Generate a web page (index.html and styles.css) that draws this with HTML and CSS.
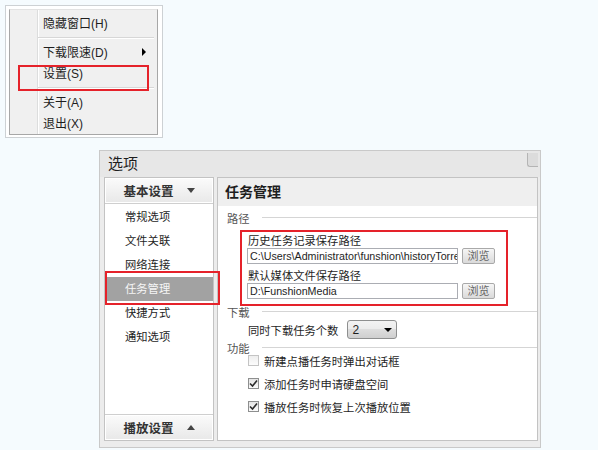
FILE: index.html
```html
<!DOCTYPE html>
<html lang="zh-CN">
<head>
    <meta charset="UTF-8">
    <title>选项</title>
    <link rel="stylesheet" href="styles.css">
</head>
<body>
    <div class="menu">
        <div class="menu-inner">
            <div class="item">隐藏窗口(H)</div>
            <div class="sep"></div>
            <div class="item">下载限速(D)<span class="arrow"></span></div>
            <div class="item">设置(S)</div>
            <div class="sep"></div>
            <div class="item">关于(A)</div>
            <div class="item">退出(X)</div>
        </div>
        <div class="mark mark-menu"></div>
    </div>

    <div class="dialog">
        <div class="titlebar">
            <span class="title">选项</span>
            <span class="corner"></span>
        </div>
        <div class="body">
            <div class="side">
                <div class="side-head">基本设置<span class="tri-down"></span></div>
                <div class="side-list">
                    <div class="side-item">常规选项</div>
                    <div class="side-item">文件关联</div>
                    <div class="side-item">网络连接</div>
                    <div class="side-item active">任务管理</div>
                    <div class="side-item">快捷方式</div>
                    <div class="side-item">通知选项</div>
                </div>
                <div class="side-foot">播放设置<span class="tri-up"></span></div>
            </div>

            <div class="main">
                <div class="main-head">任务管理</div>
                <div class="main-body">
                    <div class="group">路径</div>
                    <div class="fields">
                        <div class="field-label">历史任务记录保存路径</div>
                        <div class="path-row">
                            <div class="path"><span>C:\Users\Administrator\funshion\historyTorrent</span></div>
                            <div class="btn">浏览</div>
                        </div>
                        <div class="field-label">默认媒体文件保存路径</div>
                        <div class="path-row">
                            <div class="path"><span>D:\FunshionMedia</span></div>
                            <div class="btn">浏览</div>
                        </div>
                    </div>

                    <div class="group group-dl">下载</div>
                    <div class="opt-row">
                        同时下载任务个数
                        <div class="combo">2<span class="tri-down small"></span></div>
                    </div>

                    <div class="group group-fn">功能</div>
                    <div class="checks">
                        <div class="check"><span class="box off"></span>新建点播任务时弹出对话框</div>
                        <div class="check"><span class="box"><svg width="9" height="9" viewBox="0 0 9 9"><path d="M1 4.5 L3.5 7 L8 1.5" fill="none" stroke="#2b2b2b" stroke-width="1.6"/></svg></span>添加任务时申请硬盘空间</div>
                        <div class="check"><span class="box"><svg width="9" height="9" viewBox="0 0 9 9"><path d="M1 4.5 L3.5 7 L8 1.5" fill="none" stroke="#2b2b2b" stroke-width="1.6"/></svg></span>播放任务时恢复上次播放位置</div>
                    </div>
                </div>
            </div>
        </div>
        <div class="mark mark-side"></div>
        <div class="mark mark-path"></div>
    </div>
</body>
</html>
```

FILE: styles.css
```css
body {
    margin: 0;
    background-color: #f5fbfe;
    font-family: "Liberation Sans", "Noto Sans CJK SC", sans-serif;
    font-size: 11.3px;
    color: #1e1e1e;
}

/* tray menu */
.menu {
    position: relative;
    margin: 5px 0 0 5px;
    width: 158px;
    height: 133px;
    box-sizing: border-box;
    border: 1px solid #cdd1d4;
    background: #fff;
    padding: 3px 4px 2px 3px;
}
.menu-inner {
    height: 100%;
    box-sizing: border-box;
    border: 1px solid #a7a7a7;
    border-top-color: #e2e2e2;
    background: linear-gradient(to right, #f0f0f0 27px, #dcdddd 27px, #dcdddd 28px, #fff 28px, #fff 29px, #f0f0f0 29px);
    padding-top: 2px;
}
.item {
    height: 21px;
    display: flex;
    align-items: center;
    justify-content: space-between;
    padding: 0 11px 0 33px;
    font-size: 12px;
}
.sep {
    height: 1px;
    background: #d7d7d7;
    border-bottom: 1px solid #fff;
    margin: 4px 3px 2px 28px;
}
.arrow {
    border-left: 4px solid #000;
    border-top: 4px solid transparent;
    border-bottom: 4px solid transparent;
}

/* red annotation boxes */
.mark {
    position: absolute;
    box-sizing: border-box;
    border: 2px solid #e5222a;
}
.mark-menu {
    left: 12px;
    top: 59px;
    width: 131px;
    height: 26px;
}
.mark-side {
    left: 5px;
    top: 120px;
    width: 115px;
    height: 34px;
}
.mark-path {
    left: 140px;
    top: 79px;
    width: 268px;
    height: 76px;
}

/* options dialog */
.dialog {
    position: relative;
    margin: 12px 0 0 99px;
    width: 442px;
    height: 298px;
    box-sizing: border-box;
    border: 1px solid #c9c9c9;
    background: #ececec;
    display: flex;
    flex-direction: column;
}
.titlebar {
    height: 26px;
    display: flex;
    justify-content: space-between;
    align-items: flex-start;
    background: #e7e7e7;
}
.title {
    font-size: 15px;
    line-height: 26px;
    padding-left: 8px;
}
.corner {
    width: 11px;
    height: 14px;
    margin: 2px 2px 0 0;
    box-sizing: border-box;
    background: #dcdcdc;
    border-left: 1px solid #b4b4b4;
    border-bottom: 1px solid #b4b4b4;
    border-bottom-left-radius: 3px;
}
.body {
    flex: 1;
    display: flex;
    gap: 3px;
    padding: 0 2px 6px 4px;
}

.side {
    width: 110px;
    box-sizing: border-box;
    border: 1px solid #c3c3c3;
    background: #fff;
    display: flex;
    flex-direction: column;
}
.side-head, .side-foot {
    height: 26px;
    box-sizing: border-box;
    background: linear-gradient(#fbfbfb, #e8e8e8);
    box-shadow: inset 0 0 0 1px #fff;
    display: flex;
    align-items: center;
    justify-content: center;
    gap: 13px;
    font-size: 12.5px;
    font-weight: bold;
    color: #333;
}
.side-head {
    border-bottom: 1px solid #cfcfcf;
}
.side-foot {
    border-top: 1px solid #cfcfcf;
}
.tri-down {
    border-top: 5px solid #444;
    border-left: 4px solid transparent;
    border-right: 4px solid transparent;
}
.tri-up {
    border-bottom: 5px solid #444;
    border-left: 4px solid transparent;
    border-right: 4px solid transparent;
}
.side-list {
    flex: 1;
    padding-top: 1px;
}
.side-item {
    height: 24px;
    line-height: 24px;
    padding-left: 20px;
}
.side-item.active {
    background: #a2a2a2;
    color: #f5f5f5;
    margin-left: 2px;
    padding-left: 18px;
}

.main {
    flex: 1;
    box-sizing: border-box;
    border: 1px solid #c3c3c3;
    background: #fff;
}
.main-head {
    height: 28px;
    line-height: 28px;
    background: #efefef;
    padding-left: 7px;
    font-size: 14px;
    font-weight: bold;
}
.main-body {
    padding-left: 9px;
}
.group {
    display: flex;
    align-items: center;
    gap: 12px;
    height: 14px;
    margin-top: 5px;
    color: #555;
}
.group::after {
    content: '';
    flex: 1;
    height: 1px;
    background: #d5d5d5;
    border-bottom: 1px solid #fff;
}
.group-dl {
    margin-top: 6px;
}
.group-fn {
    margin-top: 2px;
}
.fields {
    padding-left: 21px;
}
.field-label {
    line-height: 14px;
    margin-top: 9px;
}
.field-label + .path-row + .field-label {
    margin-top: 5px;
}
.path-row {
    display: flex;
    gap: 4px;
    height: 16px;
    margin-left: -1px;
}
.path {
    width: 211px;
    box-sizing: border-box;
    border: 1px solid #abadb3;
    padding-left: 2px;
    font-size: 10.7px;
    line-height: 14px;
    white-space: nowrap;
    overflow: hidden;
    text-overflow: clip;
}
.btn {
    width: 33px;
    box-sizing: border-box;
    border: 1px solid #a9a9a9;
    border-radius: 2px;
    background: linear-gradient(#f6f6f6, #dadada);
    color: #666;
    text-align: center;
    font-size: 11px;
    line-height: 14px;
}
.opt-row {
    display: flex;
    align-items: center;
    gap: 9px;
    height: 19px;
    margin-top: 1px;
    padding-left: 21px;
}
.combo {
    width: 50px;
    height: 19px;
    box-sizing: border-box;
    border: 1px solid #8e8f8f;
    border-radius: 3px;
    background: linear-gradient(#f3f3f3, #ebebeb 50%, #dddddd 50%, #cfcfcf);
    display: flex;
    align-items: center;
    justify-content: space-between;
    padding: 0 4px 0 4px;
    font-size: 12px;
}
.tri-down.small {
    border-top-width: 4px;
    border-top-color: #000;
    border-left-width: 4px;
    border-right-width: 4px;
}
.checks {
    margin-top: -6px;
    padding-left: 21px;
}
.check {
    display: flex;
    align-items: center;
    gap: 5px;
    height: 23px;
}
.box {
    width: 11px;
    height: 11px;
    box-sizing: border-box;
    border: 1px solid #8e8f8f;
    background: linear-gradient(#e4e4e4, #fbfbfb);
    display: flex;
    align-items: center;
    justify-content: center;
}
.box.off {
    border-color: #c4c4c4;
    background: linear-gradient(#eeeeee, #fcfcfc);
}
```
